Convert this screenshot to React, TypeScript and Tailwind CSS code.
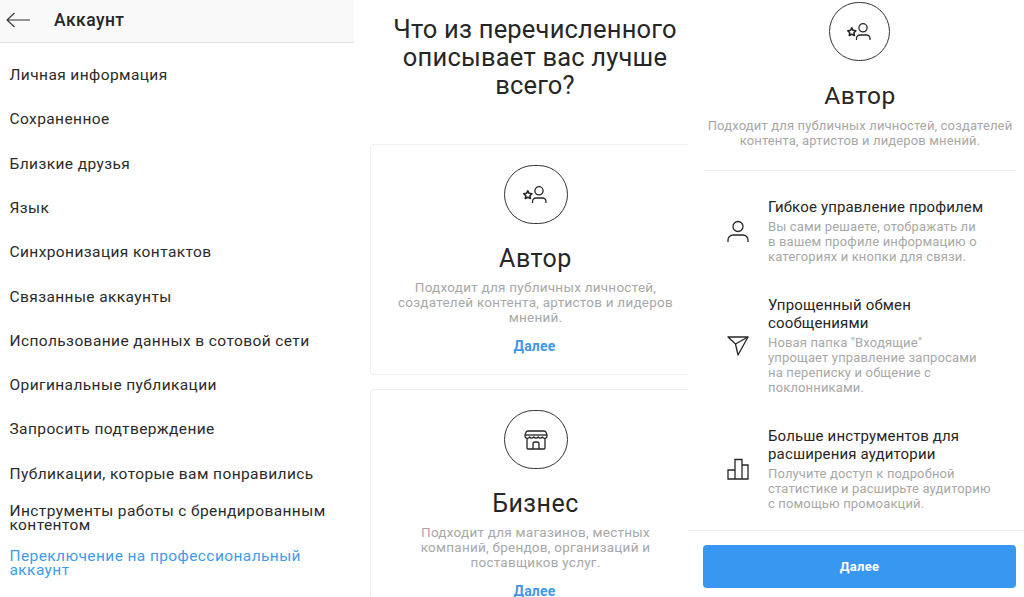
const font = "font-['Roboto',sans-serif]";

const menuItems = [
  "Личная информация",
  "Сохраненное",
  "Близкие друзья",
  "Язык",
  "Синхронизация контактов",
  "Связанные аккаунты",
  "Использование данных в сотовой сети",
  "Оригинальные публикации",
  "Запросить подтверждение",
  "Публикации, которые вам понравились",
];

function AuthorIcon() {
  return (
    <svg viewBox="0 0 25 17" fill="none" stroke="#262626" strokeWidth="1.300" className="w-[25px] h-[17px]">
      <circle cx="16" cy="4.800" r="4.100" />
      <path d="M9.500 16.500v-1a3.500 3.500 0 0 1 3.500-3.500h6.500a3.500 3.500 0 0 1 3.500 3.500v1" strokeLinecap="round" />
      <path d="M4.800 4.800l1.300 2.500 2.800.4-2 2 .5 2.800-2.600-1.300-2.500 1.300.5-2.800-2-2 2.700-.4z" strokeWidth="1.600" strokeLinejoin="round" />
    </svg>
  );
}

function ShopIcon() {
  return (
    <svg viewBox="0 0 24 20" fill="none" stroke="#262626" strokeWidth="1.300" strokeLinejoin="round" className="w-[24px] h-[20px]">
      <path d="M4 1h16a2 2 0 0 1 2 1.200l1 2.800v1a2.300 2.300 0 0 1-4.400 1 2.800 2.800 0 0 1-4.400 0 2.800 2.800 0 0 1-4.400 0 2.800 2.800 0 0 1-4.400 0A2.300 2.300 0 0 1 1 6V5l1-2.800A2 2 0 0 1 4 1z" />
      <path d="M1 5h22" />
      <path d="M3 9v9a1 1 0 0 0 1 1h16a1 1 0 0 0 1-1V9" />
      <path d="M9 19v-5a2 2 0 0 1 2-2h2a2 2 0 0 1 2 2v5" />
    </svg>
  );
}

function Circle({ children, size }: { children: React.ReactNode; size: string }) {
  return (
    <div className={`${size} rounded-full border border-[#333] flex items-center justify-center shrink-0`}>
      {children}
    </div>
  );
}

function AccountPanel() {
  return (
    <div className="w-[354px] shrink-0 h-full overflow-hidden">
      <div className="h-[43px] bg-[#f9f9f9] border-b border-[#dedede] flex items-center">
        <svg viewBox="0 0 24 16" fill="none" stroke="#333" strokeWidth="1.100" className="w-[24px] h-[16px] ml-[6px] mb-[3px]">
          <path d="M24 8H1M8.500 1L1 8l7.500 7" />
        </svg>
        <span className="ml-[24px] mb-[2px] text-[17.500px] font-medium tracking-[0.45px] text-[#262626]">Аккаунт</span>
      </div>
      <div className="pl-[9.500px] pt-[10.500px] text-[15.500px] tracking-[0.4px] text-[#2b2b2b]">
        {menuItems.map((item) => (
          <div key={item} className="h-[44.300px] flex items-center">{item}</div>
        ))}
        <div className="mt-[7.500px] leading-[14px] w-[330px]">Инструменты работы с брендированным контентом</div>
        <div className="mt-[17px] leading-[14px] w-[310px] text-[#3f9bec]">Переключение на профессиональный аккаунт</div>
      </div>
    </div>
  );
}

function AccountCard({ icon, title, text, textWidth }: { icon: React.ReactNode; title: string; text: string; textWidth: string }) {
  return (
    <div className="border border-[#efefef] border-r-0 rounded-l-[4px] h-[231px] flex flex-col items-center pt-[20px] w-[330px] shrink-0">
      <Circle size="w-[64px] h-[59px]">{icon}</Circle>
      <div className="mt-[19px] text-[25px] leading-[32px] tracking-[0.5px] text-[#262626]">{title}</div>
      <p className={`mt-[5px] ${textWidth} text-center text-[13.500px] leading-[15px] tracking-[0.25px] text-[#a8a8a8]`}>{text}</p>
      <div className="mt-[14px] pr-[2px] text-[14px] leading-[15px] font-bold tracking-[0.2px] text-[#3f97ea]">Далее</div>
    </div>
  );
}

function ChoicePanel() {
  return (
    <div className="w-[334px] shrink-0 h-full overflow-hidden pl-[16px]">
      <h1 className="pt-[15px] h-[144px] w-[330px] text-center text-[25.500px] leading-[28px] tracking-[0.2px] text-[#262626] font-normal">
        Что из перечисленного описывает вас лучше всего?
      </h1>
      <div className="flex flex-col gap-[14px]">
        <AccountCard
          icon={<AuthorIcon />}
          title="Автор"
          text="Подходит для публичных личностей, создателей контента, артистов и лидеров мнений."
          textWidth="w-[290px]"
        />
        <AccountCard
          icon={<ShopIcon />}
          title="Бизнес"
          text="Подходит для магазинов, местных компаний, брендов, организаций и поставщиков услуг."
          textWidth="w-[250px]"
        />
      </div>
    </div>
  );
}

function Feature({ icon, title, text }: { icon: React.ReactNode; title: string; text: string }) {
  return (
    <div className="flex items-center">
      <div className="w-[64px] shrink-0 flex justify-center pl-[3px]">{icon}</div>
      <div className="flex-1">
        <div className="whitespace-pre-line text-[15px] leading-[18px] tracking-[0.15px] text-[#262626]">{title}</div>
        <p className="mt-[3px] whitespace-pre-line text-[13px] leading-[15px] tracking-[0.15px] text-[#a8a8a8]">{text}</p>
      </div>
    </div>
  );
}

function AuthorPanel() {
  return (
    <div className="flex-1 h-full overflow-hidden flex flex-col">
      <div className="pl-[16px] pr-[8px] flex flex-col items-center">
        <div className="mt-[2px] mr-[2px]">
          <Circle size="w-[61px] h-[59px]"><AuthorIcon /></Circle>
        </div>
        <div className="mt-[19px] text-[24.500px] leading-[32px] tracking-[0.5px] text-[#262626]">Автор</div>
        <p className="mt-[5.500px] text-center text-[13px] leading-[15.500px] tracking-[0.15px] text-[#a8a8a8]">
          Подходит для публичных личностей, создателей контента, артистов и лидеров мнений.
        </p>
        <div className="w-full border-t border-[#efefef] mt-[21px] pt-[27.500px] flex flex-col gap-[32px]">
          <Feature
            icon={
              <svg viewBox="0 0 22 22" fill="none" stroke="#262626" strokeWidth="1.300" className="w-[22px] h-[22px]">
                <circle cx="11" cy="6.500" r="5" />
                <path d="M1 21.500v-1.500a5 5 0 0 1 5-5h10a5 5 0 0 1 5 5v1.500" strokeLinecap="round" />
              </svg>
            }
            title="Гибкое управление профилем"
            text={"Вы сами решаете, отображать ли\nв вашем профиле информацию о\nкатегориях и кнопки для связи."}
          />
          <Feature
            icon={
              <svg viewBox="0 0 22 20" fill="none" stroke="#262626" strokeWidth="1.300" strokeLinejoin="round" className="w-[22px] h-[20px]">
                <path d="M1 1h20L11 19 8.500 8z" />
                <path d="M8.500 8L21 1" />
              </svg>
            }
            title={"Упрощенный обмен\nсообщениями"}
            text={'Новая папка "Входящие"\nупрощает управление запросами\nна переписку и общение с\nпоклонниками.'}
          />
          <Feature
            icon={
              <svg viewBox="0 0 22 22" fill="none" stroke="#262626" strokeWidth="1.300" className="w-[22px] h-[22px]">
                <path d="M1 21h20M1 12h7v9H1zM8 1.500h7V21H8zM15 7h6v14h-6z" />
              </svg>
            }
            title={"Больше инструментов для\nрасширения аудитории"}
            text={"Получите доступ к подробной\nстатистике и расширьте аудиторию\nс помощью промоакций."}
          />
        </div>
      </div>
      <div className="border-t border-[#efefef] mt-[19px] pt-[14px] pl-[15px] pr-[8px]">
        <div className="h-[43px] rounded-[4px] bg-[#3897f0] flex items-center justify-center text-[13px] font-bold tracking-[0.3px] text-white">Далее</div>
      </div>
    </div>
  );
}

export default function App() {
  return (
    <div className={`${font} w-[1024px] h-[597px] bg-white flex overflow-hidden`}>
      <AccountPanel />
      <ChoicePanel />
      <AuthorPanel />
    </div>
  );
}
